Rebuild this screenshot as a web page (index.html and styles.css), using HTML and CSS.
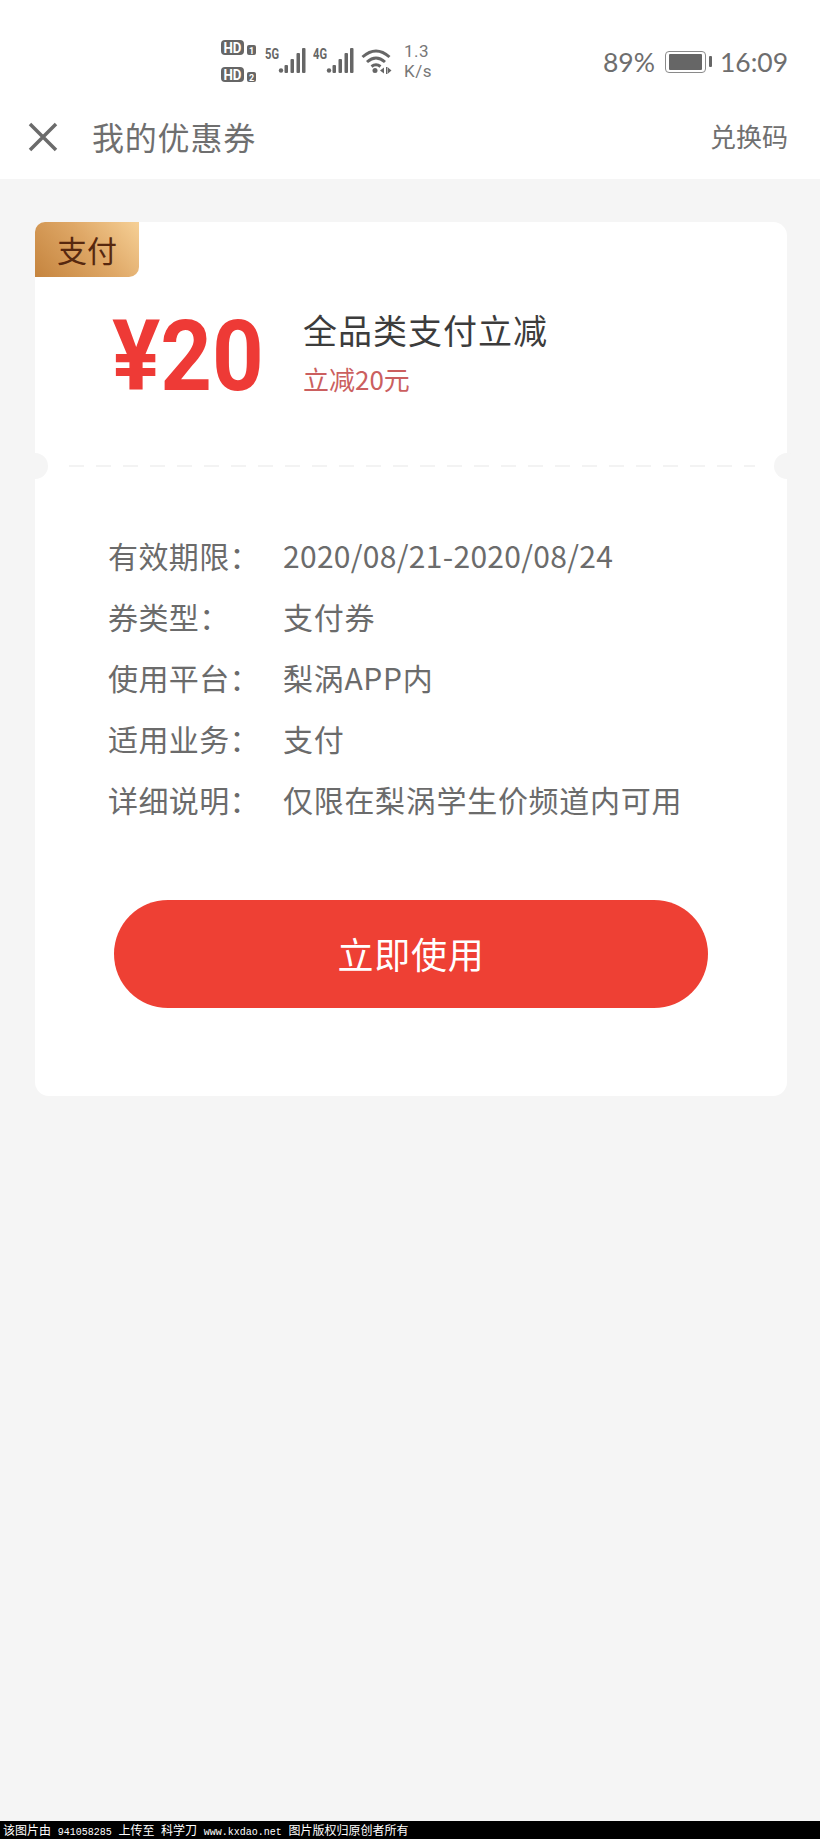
FILE: index.html
```html
<!DOCTYPE html>
<html lang="zh">
<head>
    <meta charset="UTF-8">
    <meta name="viewport" content="width=device-width, initial-scale=1.0">
    <title>我的优惠券</title>
    <link rel="stylesheet" href="styles.css">
</head>
<body>
    <div class="status-bar">
        <div class="status-left">
            <div class="hd-stack">
                <svg class="hd-icon" width="36" height="21" viewBox="0 -2 36 21">
                    <rect x="0" y="1" width="23" height="15" rx="4" fill="#666"/>
                    <text x="11.500" y="13.500" textLength="18" lengthAdjust="spacingAndGlyphs" class="hd-text">HD</text>
                    <rect x="26" y="6" width="9" height="10" rx="2" fill="#666"/>
                    <text x="30.500" y="14.500" class="hd-num">1</text>
                </svg>
                <svg class="hd-icon" width="36" height="21" viewBox="0 -2 36 21">
                    <rect x="0" y="1" width="23" height="15" rx="4" fill="#666"/>
                    <text x="11.500" y="13.500" textLength="18" lengthAdjust="spacingAndGlyphs" class="hd-text">HD</text>
                    <rect x="26" y="6" width="9" height="10" rx="2" fill="#666"/>
                    <text x="30.500" y="14.500" class="hd-num">2</text>
                </svg>
            </div>
            <svg class="signal" width="44" height="30" viewBox="0 -4 44 30">
                <text x="0" y="11" textLength="14" lengthAdjust="spacingAndGlyphs" class="net-text">5G</text>
                <circle cx="16" cy="22.500" r="2.200" fill="#666"/>
                <rect x="19.500" y="17" width="3.500" height="8" rx="1" fill="#666"/>
                <rect x="25.500" y="11" width="3.500" height="14" rx="1" fill="#666"/>
                <rect x="31.500" y="5" width="3.500" height="20" rx="1" fill="#666"/>
                <rect x="37" y="0" width="3.500" height="25" rx="1" fill="#666"/>
            </svg>
            <svg class="signal" width="44" height="30" viewBox="0 -4 44 30">
                <text x="0" y="11" textLength="14" lengthAdjust="spacingAndGlyphs" class="net-text">4G</text>
                <circle cx="16" cy="22.500" r="2.200" fill="#666"/>
                <rect x="19.500" y="17" width="3.500" height="8" rx="1" fill="#666"/>
                <rect x="25.500" y="11" width="3.500" height="14" rx="1" fill="#666"/>
                <rect x="31.500" y="5" width="3.500" height="20" rx="1" fill="#666"/>
                <rect x="37" y="0" width="3.500" height="25" rx="1" fill="#666"/>
            </svg>
            <svg class="wifi" width="31" height="26" viewBox="0 0 31 26">
                <path d="M1.500 9 Q15 -3 28.500 9" fill="none" stroke="#666" stroke-width="3"/>
                <path d="M6 14 Q15 6 24 14" fill="none" stroke="#666" stroke-width="3"/>
                <path d="M10.500 18.500 Q15 15 19.500 18.500" fill="none" stroke="#666" stroke-width="3"/>
                <circle cx="14" cy="22.500" r="2.500" fill="#666"/>
                <path d="M19 22.500 L23 19.500 V25.500 Z M25 19 H26.500 V26 H25 Z M27 19.500 L30.500 22.500 L27 25.500 Z" fill="#666"/>
            </svg>
            <div class="speed">
                <span>1.3</span>
                <span>K/s</span>
            </div>
        </div>
        <div class="status-right">
            <span>89%</span>
            <div class="battery"><div class="battery-fill"></div></div>
            <span>16:09</span>
        </div>
    </div>

    <div class="nav-bar">
        <svg class="close-icon" width="30" height="30" viewBox="0 0 30 30">
            <path d="M2 2 L28 28 M28 2 L2 28" stroke="#6b6b6b" stroke-width="3.500" fill="none"/>
        </svg>
        <div class="nav-title">我的优惠券</div>
        <div class="nav-action">兑换码</div>
    </div>

    <div class="card">
        <div class="badge">支付</div>
        <div class="coupon-head">
            <div class="amount">¥20</div>
            <div class="coupon-info">
                <div class="coupon-title">全品类支付立减</div>
                <div class="coupon-sub">立减20元</div>
            </div>
        </div>

        <div class="divider">
            <span class="notch notch-left"></span>
            <span class="notch notch-right"></span>
        </div>

        <div class="details">
            <div class="detail-row"><span class="detail-label">有效期限：</span><span class="detail-date">2020/08/21-2020/08/24</span></div>
            <div class="detail-row"><span class="detail-label">券类型：</span><span>支付券</span></div>
            <div class="detail-row"><span class="detail-label">使用平台：</span><span>梨涡APP内</span></div>
            <div class="detail-row"><span class="detail-label">适用业务：</span><span>支付</span></div>
            <div class="detail-row"><span class="detail-label">详细说明：</span><span>仅限在梨涡学生价频道内可用</span></div>
        </div>

        <button class="use-button">立即使用</button>
    </div>

    <div class="spacer"></div>
    <div class="watermark">该图片由 <span class="wm-latin">941058285</span> 上传至 科学刀 <span class="wm-latin">www.kxdao.net</span> 图片版权归原创者所有</div>
</body>
</html>
```

FILE: styles.css
```css
* {
    margin: 0;
    padding: 0;
    box-sizing: border-box;
}

body {
    width: 820px;
    height: 1839px;
    display: flex;
    flex-direction: column;
    background-color: #f5f5f5;
    font-family: "Noto Sans CJK SC", "Noto Sans", sans-serif;
    color: #6b6b6b;
    overflow: hidden;
}

/* status bar */
.status-bar {
    height: 100px;
    padding: 37px 32px 0 221px;
    display: flex;
    justify-content: space-between;
    align-items: flex-start;
    background-color: #fff;
}

.status-left {
    display: flex;
    align-items: flex-start;
}

.hd-stack {
    display: flex;
    flex-direction: column;
    gap: 6px;
    margin-right: 8px;
}

.hd-icon {
    display: block;
}

.hd-text {
    font-family: "Roboto", sans-serif;
    font-size: 14px;
    font-weight: 700;
    fill: #fff;
    text-anchor: middle;
}

.hd-num {
    font-family: "Roboto", sans-serif;
    font-size: 9px;
    font-weight: 700;
    fill: #fff;
    text-anchor: middle;
}

.net-text {
    font-family: "Roboto", sans-serif;
    font-size: 14px;
    font-weight: 700;
    fill: #666;
}

.signal {
    margin-top: 7px;
    margin-right: 4px;
}

.wifi {
    margin-top: 11px;
}

.speed {
    margin-left: 12px;
    margin-top: 4px;
    display: flex;
    flex-direction: column;
    font-family: "Roboto", sans-serif;
    font-size: 17px;
    line-height: 20px;
    color: #777;
    letter-spacing: 0.5px;
}

.status-right {
    display: flex;
    align-items: center;
    margin-top: 11px;
    font-family: "Lato", "Roboto", sans-serif;
    font-size: 26.500px;
    line-height: 28px;
    color: #6e6e6e;
}

.battery {
    position: relative;
    width: 41px;
    height: 22px;
    margin: 0 14px 0 10px;
    padding: 2px 3px;
    border: 1.500px solid #8a8a8a;
    border-radius: 4px;
}

.battery::after {
    content: "";
    position: absolute;
    right: -7px;
    top: 4px;
    width: 3px;
    height: 11px;
    border-radius: 1px;
    background-color: #666;
}

.battery-fill {
    width: 100%;
    height: 100%;
    background-color: #666;
    border-radius: 1px;
}

/* nav */
.nav-bar {
    height: 79px;
    padding: 0 32px 6px 28px;
    display: flex;
    align-items: center;
    background-color: #fff;
}

.nav-title {
    margin-left: 34px;
    padding-bottom: 2px;
    font-size: 32px;
    letter-spacing: 0.8px;
    color: #6f6f6f;
}

.nav-action {
    margin-left: auto;
    padding-bottom: 2px;
    font-size: 26px;
    color: #707070;
}

/* coupon card */
.card {
    position: relative;
    height: 874px;
    margin: 43px 33px 0 35px;
    background-color: #fff;
    border-radius: 14px;
}

.badge {
    width: 104px;
    height: 55px;
    line-height: 55px;
    text-align: center;
    font-size: 30px;
    color: #57280f;
    background: linear-gradient(50deg, #c5843e 0%, #dfa867 55%, #f6d096 100%);
    border-radius: 10px 0 10px 0;
}

.coupon-head {
    height: 188px;
    padding: 21px 0 0 77px;
    display: flex;
}

.amount {
    width: 191px;
    height: 90px;
    margin-top: 14px;
    font-family: "Roboto", sans-serif;
    font-size: 98px;
    line-height: 90px;
    font-weight: 700;
    color: #ee3a36;
    transform: scaleX(0.92);
    transform-origin: left center;
}

.coupon-info {
    margin-top: 9px;
}

.coupon-title {
    font-size: 34px;
    line-height: 46px;
    letter-spacing: 1px;
    color: #3c3c3c;
}

.coupon-sub {
    margin-top: 9px;
    font-size: 26px;
    line-height: 34px;
    color: #cb5f5f;
}

.divider {
    position: relative;
    height: 2px;
    margin: 0 32px 0 34px;
    background-image: repeating-linear-gradient(90deg, #f3f3f3 0, #f3f3f3 15px, transparent 15px, transparent 27px);
}

.notch {
    position: absolute;
    top: -12px;
    width: 26px;
    height: 26px;
    border-radius: 50%;
    background-color: #f5f5f5;
}

.notch-left {
    left: -47px;
}

.notch-right {
    right: -45px;
}

.details {
    margin-top: 58px;
    padding-left: 73px;
    font-size: 30px;
    color: #6b6b6b;
}

.detail-row {
    height: 61px;
    line-height: 61px;
    display: flex;
    letter-spacing: 0.7px;
}

.detail-label {
    width: 175px;
    letter-spacing: 0.4px;
}

.detail-date {
    letter-spacing: 0.3px;
}

.use-button {
    display: block;
    width: 594px;
    height: 108px;
    margin: 70px 0 0 79px;
    padding-bottom: 2px;
    border: none;
    border-radius: 54px;
    background-color: #ee4034;
    color: #fff;
    font-family: inherit;
    font-size: 36px;
    letter-spacing: 0.8px;
}

.spacer {
    flex: 1;
}

.watermark {
    height: 18px;
    padding-left: 3px;
    background-color: #000;
    color: #fff;
    font-size: 12px;
    line-height: 18px;
    word-spacing: 4px;
    white-space: nowrap;
}

.wm-latin {
    font-family: "Liberation Mono", monospace;
    font-size: 10px;
}
```
